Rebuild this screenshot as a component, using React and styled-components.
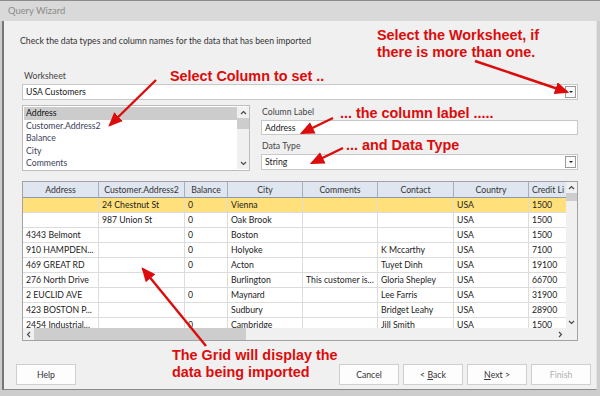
import React from 'react';
import styled, { createGlobalStyle } from 'styled-components';

const GlobalStyle = createGlobalStyle`
  html, body {
    margin: 0;
    padding: 0;
    background: #cdcdcd;
  }
  * { box-sizing: border-box; }
`;

const UI_FONT = `Lato, "Open Sans", sans-serif`;
const RED = '#dc0c0c';

const Frame = styled.div`
  position: relative;
  width: 600px;
  height: 396px;
  overflow: hidden;
  background: #cdcdcd;
  font-family: ${UI_FONT};
  font-size: 8.7px;
  color: #222;
`;

const TitleBar = styled.div`
  height: 21px;
  border-top: 1px solid #8c8c8c;
  background: #d9d9d9;
  color: #8a8a8a;
  font-size: 9.4px;
  line-height: 20px;
  padding-left: 8px;
`;

const Body = styled.div`
  margin-left: 2px;
  width: 595px;
  height: 369px;
  background: #f0f0f0;
  border-left: 2px solid #767676;
  border-right: 1px solid #e4e4e4;
  border-bottom: 1px solid #8a8a8a;
  display: flex;
  flex-direction: column;
`;

const Intro = styled.div`
  margin: 14px 0 0 16px;
  height: 12px;
  line-height: 12px;
  color: #333;
`;

const Content = styled.div`
  padding: 0 18px;
  display: flex;
  flex-direction: column;
`;

const Label = styled.div`
  height: 12px;
  line-height: 12px;
  padding-left: ${p => p.$indent || 1}px;
  color: #444;
  margin-top: ${p => p.$top || 0}px;
  margin-bottom: 2px;
`;

const Field = styled.div`
  height: ${p => p.$h || 16}px;
  background: #fff;
  border: 1px solid #c8c8c8;
  display: flex;
  align-items: center;
  padding-left: 3px;
  padding-right: 1px;
`;

const FieldText = styled.span`
  flex: 1;
  line-height: 12px;
`;

const DropButton = styled.div`
  width: 11px;
  height: 12px;
  border: 1px solid #9a9a9a;
  background: #fbfbfb;
  display: flex;
  align-items: center;
  justify-content: center;
  &::after {
    content: '';
    border-left: 2px solid transparent;
    border-right: 2px solid transparent;
    border-top: 2px solid #222;
  }
`;

const MiddleRow = styled.div`
  margin-top: 5px;
  display: flex;
  gap: 11px;
`;

const ListBox = styled.div`
  width: 228px;
  height: 66px;
  background: #fff;
  border: 1px solid #bdbdbd;
  display: flex;
  padding: 1px 0 1px 1px;
`;

const ListItems = styled.div`
  flex: 1;
  display: flex;
  flex-direction: column;
`;

const ListItem = styled.div`
  height: 12.6px;
  line-height: 12.6px;
  padding-left: 2px;
  color: ${p => (p.$selected ? '#111' : '#3a3f5a')};
  background: ${p => (p.$selected ? '#cccccc' : 'transparent')};
`;

const VScroll = styled.div`
  width: ${p => p.$w || 12}px;
  background: #f0f0f0;
  display: flex;
  flex-direction: column;
  align-items: center;
`;

const ScrollArrow = styled.div`
  height: 11px;
  width: 100%;
  display: flex;
  align-items: center;
  justify-content: center;
`;

const VThumb = styled.div`
  width: 100%;
  height: ${p => p.$h}px;
  background: #cdcdcd;
`;

const Spacer = styled.div`
  flex: 1;
`;

const SidePanel = styled.div`
  flex: 1;
  display: flex;
  flex-direction: column;
`;

const Grid = styled.div`
  margin-top: 10px;
  height: 160px;
  border: 1px solid #a2a2a2;
  background: #fff;
  display: grid;
  grid-template-columns: 1fr 11px;
  grid-template-rows: 1fr 12px;
  overflow: hidden;
`;

const COLS = [76, 86, 43, 75, 75, 76, 75, 39];

const Table = styled.div`
  display: grid;
  grid-template-columns: ${COLS.map(c => c + 'px').join(' ')};
  grid-template-rows: 16px;
  grid-auto-rows: 15px;
  overflow: hidden;
  align-content: start;
`;

const HeadCell = styled.div`
  background: #dfe6f0;
  border-right: 1px solid #a6afbd;
  border-bottom: 1px solid #8e97a6;
  text-align: center;
  line-height: 15px;
  color: #333;
  white-space: nowrap;
  overflow: hidden;
`;

const Cell = styled.div`
  background: ${p => (p.$active ? '#ffe07a' : '#fff')};
  border-right: 1px solid #dcdcdc;
  border-bottom: 1px solid #dcdcdc;
  padding-left: 3px;
  line-height: 14px;
  white-space: nowrap;
  overflow: hidden;
  color: #222;
`;

const HScroll = styled.div`
  background: #f0f0f0;
  display: flex;
  align-items: center;
`;

const HThumb = styled.div`
  width: 212px;
  height: 100%;
  background: #cdcdcd;
`;

const HArrow = styled.div`
  width: 11px;
  height: 100%;
  display: flex;
  align-items: center;
  justify-content: center;
`;

const Corner = styled.div`
  background: #f0f0f0;
`;

const Footer = styled.div`
  margin-top: 23px;
  padding: 0 5px 0 12px;
  display: flex;
  gap: 4px;
`;

const Button = styled.div`
  width: 60px;
  height: 21px;
  background: #fdfdfd;
  border: 1px solid #cfcfcf;
  display: flex;
  align-items: center;
  justify-content: center;
  color: ${p => (p.$disabled ? '#b0b0b0' : '#333')};
  margin-right: ${p => (p.$push ? 'auto' : '0')};
  u { text-decoration: underline; }
`;

const Note = styled.div`
  position: absolute;
  left: ${p => p.$x}px;
  top: ${p => p.$y}px;
  font-family: "Liberation Sans", Arial, sans-serif;
  font-weight: bold;
  font-size: 14.4px;
  line-height: 16.5px;
  color: ${RED};
  white-space: nowrap;
`;

const ArrowLayer = styled.svg`
  position: absolute;
  left: 0;
  top: 0;
  pointer-events: none;
`;

const Chevron = ({ dir }) => {
  const d = {
    up: 'M1 4 L3.5 1.5 L6 4',
    down: 'M1 1 L3.5 3.5 L6 1',
  }[dir];
  if (!d) {
    const h = dir === 'left' ? 'M4 1 L1.5 3.5 L4 6' : 'M1 1 L3.5 3.5 L1 6';
    return (
      <svg width="5" height="7" viewBox="0 0 5 7">
        <path d={h} fill="none" stroke="#444" strokeWidth="1.1" />
      </svg>
    );
  }
  return (
    <svg width="7" height="5" viewBox="0 0 7 5">
      <path d={d} fill="none" stroke="#444" strokeWidth="1.1" />
    </svg>
  );
};

const listItems = ['Address', 'Customer.Address2', 'Balance', 'City', 'Comments'];

const headers = ['Address', 'Customer.Address2', 'Balance', 'City', 'Comments', 'Contact', 'Country', 'Credit Li'];

const rows = [
  ['', '24 Chestnut St', '0', 'Vienna', '', '', 'USA', '1500'],
  ['', '987 Union St', '0', 'Oak Brook', '', '', 'USA', '1500'],
  ['4343 Belmont', '', '0', 'Boston', '', '', 'USA', '1500'],
  ['910 HAMPDEN...', '', '0', 'Holyoke', '', 'K Mccarthy', 'USA', '7100'],
  ['469 GREAT RD', '', '0', 'Acton', '', 'Tuyet Dinh', 'USA', '19100'],
  ['276 North Drive', '', '', 'Burlington', 'This customer is...', 'Gloria Shepley', 'USA', '66700'],
  ['2 EUCLID AVE', '', '0', 'Maynard', '', 'Lee Farris', 'USA', '31900'],
  ['423  BOSTON P...', '', '', 'Sudbury', '', 'Bridget Leahy', 'USA', '28900'],
  ['2454 Industrial...', '', '0', 'Cambridge', '', 'Jill Smith', 'USA', '1500'],
];

// annotation arrows: [x1, y1, x2, y2] with the head at x2,y2
const arrows = [
  [156, 80, 110, 125],
  [475, 61, 567, 92],
  [333, 118, 302, 133],
  [343, 148, 312, 163],
  [206, 346, 143, 269],
];

const Arrows = () => (
  <ArrowLayer width="600" height="396" viewBox="0 0 600 396">
    <defs>
      <marker id="head" markerWidth="6" markerHeight="6" refX="5" refY="3" orient="auto" markerUnits="strokeWidth">
        <path d="M0 0.4 L6 3 L0 5.6 Z" fill={RED} />
      </marker>
    </defs>
    {arrows.map(([x1, y1, x2, y2], i) => (
      <line key={i} x1={x1} y1={y1} x2={x2} y2={y2} stroke={RED} strokeWidth="2.4" markerEnd="url(#head)" />
    ))}
  </ArrowLayer>
);

export default function App() {
  return (
    <Frame>
      <GlobalStyle />
      <TitleBar>Query Wizard</TitleBar>
      <Body>
        <Intro>Check the data types and column names for the data that has been imported</Intro>
        <Content>
          <Label $top={23} $indent={2}>Worksheet</Label>
          <Field>
            <FieldText>USA Customers</FieldText>
            <DropButton />
          </Field>
          <MiddleRow>
            <ListBox>
              <ListItems>
                {listItems.map((item, i) => (
                  <ListItem key={item} $selected={i === 0}>{item}</ListItem>
                ))}
              </ListItems>
              <VScroll>
                <ScrollArrow><Chevron dir="up" /></ScrollArrow>
                <VThumb $h={11} />
                <Spacer />
                <ScrollArrow><Chevron dir="down" /></ScrollArrow>
              </VScroll>
            </ListBox>
            <SidePanel>
              <Label $top={1}>Column Label</Label>
              <Field $h={15}>
                <FieldText>Address</FieldText>
              </Field>
              <Label $top={5}>Data Type</Label>
              <Field>
                <FieldText>String</FieldText>
                <DropButton />
              </Field>
            </SidePanel>
          </MiddleRow>
          <Grid>
            <Table>
              {headers.map(h => (
                <HeadCell key={h}>{h}</HeadCell>
              ))}
              {rows.map((row, r) =>
                row.map((v, c) => (
                  <Cell key={r + '-' + c} $active={r === 0}>{v}</Cell>
                ))
              )}
            </Table>
            <VScroll $w={11}>
              <ScrollArrow><Chevron dir="up" /></ScrollArrow>
              <VThumb $h={8} />
              <Spacer />
              <ScrollArrow><Chevron dir="down" /></ScrollArrow>
            </VScroll>
            <HScroll>
              <HArrow><Chevron dir="left" /></HArrow>
              <HThumb />
              <Spacer />
              <HArrow><Chevron dir="right" /></HArrow>
            </HScroll>
            <Corner />
          </Grid>
        </Content>
        <Footer>
          <Button $push>Help</Button>
          <Button>Cancel</Button>
          <Button>&lt;&nbsp;<u>B</u>ack</Button>
          <Button><u>N</u>ext&nbsp;&gt;</Button>
          <Button $disabled>Finish</Button>
        </Footer>
      </Body>
      <Note $x={170} $y={68}>Select Column to set ..</Note>
      <Note $x={377} $y={27}>Select the Worksheet, if<br />there is more than one.</Note>
      <Note $x={340} $y={105}>... the column label .....</Note>
      <Note $x={346} $y={137}>... and Data Type</Note>
      <Note $x={172} $y={347}>The Grid will display the<br />data being imported</Note>
      <Arrows />
    </Frame>
  );
}
